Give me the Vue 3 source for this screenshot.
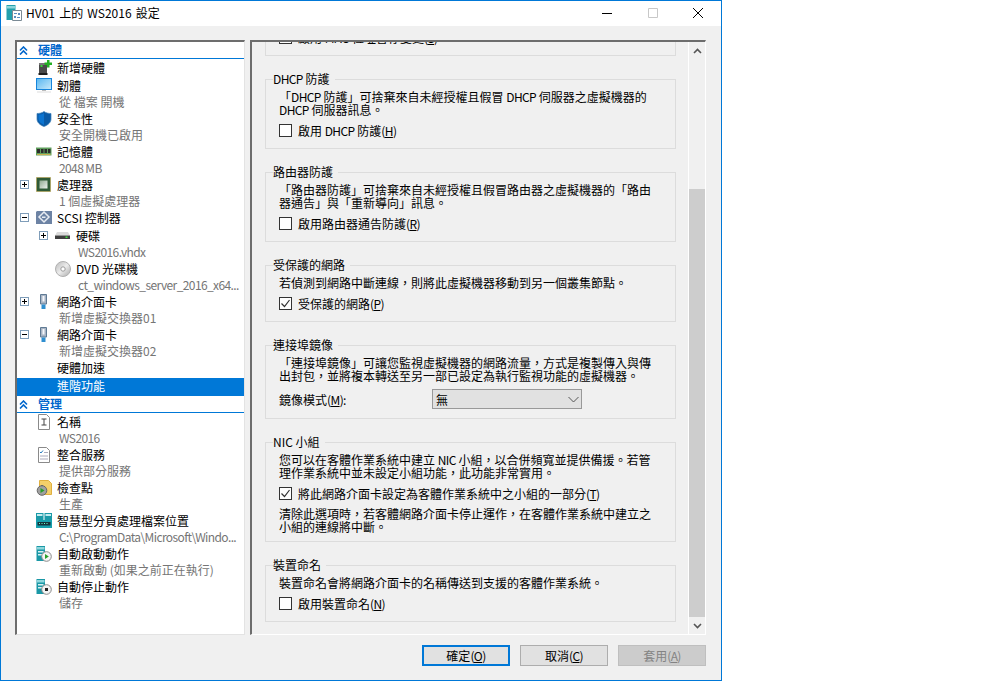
<template>
  <div class="window">
    <div class="titlebar">
      <svg class="app-icon" viewBox="0 0 16 16" v-html="icons.title"></svg>
      <span class="title-text">HV01 上的 WS2016 設定</span>
      <div class="controls">
        <svg width="10" height="10" viewBox="0 0 10 10"><path d="M0 5.500h10" stroke="#000" fill="none" /></svg>
        <svg width="10" height="10" viewBox="0 0 10 10"><path d="M.5.500h9v9h-9z" stroke="#c8c8c8" fill="none" /></svg>
        <svg width="10" height="10" viewBox="0 0 10 10"><path d="M0 0l10 10M10 0L0 10" stroke="#000" fill="none" /></svg>
      </div>
    </div>

    <div class="main">
      <div class="tree">
        <template v-for="row in rows" :key="row.id">
          <div v-if="row.section" class="section">
            <svg width="9" height="9" viewBox="0 0 9 9"><path d="M1 4.500l3.500-3.500L8 4.500M1 8.500L4.500 5 8 8.500" stroke="#0066cc" stroke-width="1.6" fill="none" /></svg>
            <span>{{ row.section }}</span>
          </div>
          <div v-else class="row" :class="{ selected: row.selected, sub: row.sub, nested: row.nested, single: row.single, tight: row.tight }">
            <span class="expander">
              <span v-if="row.exp" class="box">
                <svg width="9" height="9" viewBox="0 0 9 9"><path :d="row.exp === '+' ? 'M2 4.500h5M4.500 2v5' : 'M2 4.500h5'" stroke="#000" fill="none" /></svg>
              </span>
            </span>
            <svg v-if="row.icon" class="icon" viewBox="0 0 16 16" v-html="icons[row.icon]"></svg>
            <span v-else class="icon"></span>
            <span class="label">{{ row.text }}</span>
          </div>
        </template>
      </div>

      <div class="detail">
        <div class="scroller">
          <div class="content">
            <fieldset class="group first">
              <legend>MAC 位址</legend>
              <label class="check"><span class="cb"></span>啟用 MAC 位址暫存變更<span class="lat">(<u>S</u>)</span></label>
            </fieldset>

            <fieldset class="group">
              <legend><span class="lat">DHCP</span> 防護</legend>
              <p>「<span class="lat">DHCP</span> 防護」可捨棄來自未經授權且假冒 <span class="lat">DHCP</span> 伺服器之虛擬機器的<br /><span class="lat">DHCP</span> 伺服器訊息。</p>
              <label class="check"><span class="cb"></span>啟用 <span class="lat">DHCP</span> 防護<span class="lat">(<u>H</u>)</span></label>
            </fieldset>

            <fieldset class="group">
              <legend>路由器防護</legend>
              <p>「路由器防護」可捨棄來自未經授權且假冒路由器之虛擬機器的「路由<br />器通告」與「重新導向」訊息。</p>
              <label class="check"><span class="cb"></span>啟用路由器通告防護<span class="lat">(<u>R</u>)</span></label>
            </fieldset>

            <fieldset class="group">
              <legend>受保護的網路</legend>
              <p>若偵測到網路中斷連線，則將此虛擬機器移動到另一個叢集節點。</p>
              <label class="check"><span class="cb">
                <svg width="11" height="11" viewBox="0 0 11 11"><path d="M1.500 5.500l3 3 5-6.500" stroke="#333" stroke-width="1.200" fill="none" /></svg>
              </span>受保護的網路<span class="lat">(<u>P</u>)</span></label>
            </fieldset>

            <fieldset class="group">
              <legend>連接埠鏡像</legend>
              <p>「連接埠鏡像」可讓您監視虛擬機器的網路流量，方式是複製傳入與傳<br />出封包，並將複本轉送至另一部已設定為執行監視功能的虛擬機器。</p>
              <div class="mirror">
                <span class="mirror-label">鏡像模式<span class="lat">(<u>M</u>):</span></span>
                <div class="select">
                  <span>無</span>
                  <svg width="11" height="7" viewBox="0 0 11 7"><path d="M.5 1l5 5 5-5" stroke="#555" fill="none" /></svg>
                </div>
              </div>
            </fieldset>

            <fieldset class="group">
              <legend>NIC 小組</legend>
              <p>您可以在客體作業系統中建立 <span class="lat">NIC</span> 小組，以合併頻寬並提供備援。若管<br />理作業系統中並未設定小組功能，此功能非常實用。</p>
              <label class="check"><span class="cb">
                <svg width="11" height="11" viewBox="0 0 11 11"><path d="M1.500 5.500l3 3 5-6.500" stroke="#333" stroke-width="1.200" fill="none" /></svg>
              </span>將此網路介面卡設定為客體作業系統中之小組的一部分<span class="lat">(<u>T</u>)</span></label>
              <p class="after">清除此選項時，若客體網路介面卡停止運作，在客體作業系統中建立之<br />小組的連線將中斷。</p>
            </fieldset>

            <fieldset class="group">
              <legend>裝置命名</legend>
              <p>裝置命名會將網路介面卡的名稱傳送到支援的客體作業系統。</p>
              <label class="check"><span class="cb"></span>啟用裝置命名<span class="lat">(<u>N</u>)</span></label>
            </fieldset>
          </div>
        </div>
        <div class="scrollbar">
          <svg width="9" height="6" viewBox="0 0 9 6"><path d="M1 5l3.500-3.500L8 5" stroke="#555" stroke-width="1.600" fill="none" /></svg>
          <div class="track"><div class="thumb"></div></div>
          <svg width="9" height="6" viewBox="0 0 9 6"><path d="M1 1l3.500 3.500L8 1" stroke="#555" stroke-width="1.600" fill="none" /></svg>
        </div>
      </div>
    </div>

    <div class="footer">
      <button class="btn default">確定<span class="lat">(<u>O</u>)</span></button>
      <button class="btn">取消<span class="lat">(<u>C</u>)</span></button>
      <button class="btn disabled">套用<span class="lat">(<u>A</u>)</span></button>
    </div>
  </div>
</template>

<script setup>
const server = `<path d="M.5 0h8.500v15H.5z" fill="#1a98a6"/><path d="M1 1h7.500v2.500H1z" fill="#8fd6dc"/><path d="M2 5h5.500v1.500H2zM2 8h5.500v1.500H2z" fill="#d8f0f2"/>`

const icons = {
  title: `<path d="M.5 0h9v15h-9z" fill="#23a0ad"/><path d="M1 1h8v2.500H1z" fill="#8ad4da"/><path d="M6.500 5.500h9v10h-9z" fill="#fff" stroke="#7a8a95"/><path d="M8 8h3v1H8zM12 8h2v2h-2zM8 11h2v2H8zM11 12h3v1h-3z" fill="#5a8ec0"/>`,
  add: `<path d="M3 3h8v10H3z" fill="#4a4a4a"/><path d="M3 3h8v2H3z" fill="#777"/><path d="M2.500 13h9v2h-9z" fill="#1e1e1e"/><path d="M4.500 5h2v2h-2z" fill="#38d838"/><path d="M11 0h2.500v2.500H16V5h-2.500v2.500H11V5H8.500V2.500H11z" fill="#24b024"/>`,
  fw: `<defs><linearGradient id="fwg" x1="0" y1="0" x2="1" y2="1"><stop offset="0" stop-color="#5cb8f0"/><stop offset="1" stop-color="#c4e8fb"/></linearGradient></defs><path d="M0 0h16v12H0z" fill="#1685dc"/><path d="M1 1h14v10H1z" fill="url(#fwg)"/><path d="M6 12h4v1H6z" fill="#bbb"/><path d="M1 13.500h14v1H1z" fill="#dcdcdc"/>`,
  shield: `<path d="M8 .5C6 2 3.500 2.500 1 2.500V8c0 3.500 3 6 7 7.500 4-1.500 7-4 7-7.500V2.500C12.500 2.500 10 2 8 .5z" fill="#0a5aa6" stroke="#3d7fb8" stroke-width=".7"/><path d="M8 2C6.500 3 4.500 3.500 2.500 3.500V8c0 2.500 2.500 4.500 5.500 6z" fill="#0c74d0"/>`,
  ram: `<path d="M0 3.500h15.500v8H0z" fill="#5f9e5c"/><path d="M1 5h3v4H1zM5 5h2.500v4H5zM8.500 5H11v4H8.500zM12 5h2.500v4H12z" fill="#2c2c2c"/><path d="M1 10h13.500v1H1z" fill="#c8b050"/>`,
  cpu: `<defs><linearGradient id="cpug" x1="0" y1="0" x2="1" y2="1"><stop offset="0" stop-color="#8fa890"/><stop offset="1" stop-color="#eef2ee"/></linearGradient></defs><path d="M.5.500h14v14H.5z" fill="#2f5a36" stroke="#b89a3a" stroke-dasharray="1 1"/><path d="M2 2h11v11H2z" fill="#2f5a36"/><path d="M3.500 3.500h8v8h-8z" fill="url(#cpug)"/>`,
  scsi: `<path d="M1 1h15v13H0V2z" fill="#6d83a4"/><path d="M8 2l5 5-5 5-5-5z" fill="none" stroke="#e8ecf2" stroke-width="1.500"/><path d="M6 6.500h3.500V8H6z" fill="#e8ecf2"/>`,
  disk: `<path d="M2 4h11l2 3.500H0z" fill="#dadada"/><path d="M0 7.500h15V11H0z" fill="#3f3f3f"/><path d="M10.500 8.500h2v1.500h-2z" fill="#40e040"/>`,
  dvd: `<defs><linearGradient id="dvdg" x1="0" y1="0" x2="1" y2="1"><stop offset="0" stop-color="#b8b8b8"/><stop offset=".5" stop-color="#ececec"/><stop offset="1" stop-color="#a8a8a8"/></linearGradient></defs><circle cx="8" cy="8" r="7.500" fill="url(#dvdg)" stroke="#b0b0b0"/><circle cx="8" cy="8" r="2.200" fill="#fff" stroke="#9a9a9a"/>`,
  nic: `<path d="M4.500.500h6v9.500h-6z" fill="#a8b4c4" stroke="#5f7a94"/><path d="M6.500 2h2v5.500h-2z" fill="#f4f6fa"/><path d="M5.500 10.500h4V15h-4z" fill="#2f8fd0"/>`,
  name: `<path d="M2.500.5h8l3 3v12h-11z" fill="#fff" stroke="#8a8a8a"/><path d="M5.500 5h5M8 5v6M5.500 11h5" stroke="#444" fill="none"/>`,
  integ: `<path d="M2.500.5h8l3 3v12h-11z" fill="#fff" stroke="#8a8a8a"/><path d="M4 5l1 1 2-2.500" stroke="#2a7fc0" fill="none"/><path d="M8 5.500h4M4 9h8M4 12h8" stroke="#aab" fill="none"/>`,
  check: `<path d="M3.500.5h9l3 3v11h-12z" fill="#f4cf6a" stroke="#e0b040"/><circle cx="6" cy="10.500" r="4.800" fill="#a0a0a0" stroke="#666"/><path d="M4.500 8v5l4-2.500z" fill="#28a028"/><path d="M5 5h2v1H5z" fill="#666"/>`,
  smart: `<path d="M0 0h7.500v7H0zM8.500 0H16v7H8.500z" fill="#1a9aa8"/><path d="M1 1h5.500v2H1zM9.500 1H15v2H9.500z" fill="#c4ecef"/><path d="M0 7h16v8H0z" fill="#17a0ae"/><path d="M1.500 9h13v3.500h-13z" fill="#15323c"/><path d="M3 10h1v1H3zM5.500 10h1v1h-1zM8 10h1v1H8zM10.500 10h1v1h-1z" fill="#6fc"/>`,
  start: `${server}<circle cx="10.500" cy="10.500" r="4.800" fill="#f4f4f4" stroke="#8a8a8a"/><path d="M9 8v5l3.800-2.500z" fill="#28a028"/>`,
  stop: `${server}<circle cx="10.500" cy="10.500" r="4.800" fill="#f4f4f4" stroke="#8a8a8a"/><path d="M9 9h3v3H9z" fill="#222"/>`,
}

const rows = [
  { section: '硬體' },
  { text: '新增硬體', icon: 'add', single: true },
  { text: '韌體', icon: 'fw' },
  { text: '從 檔案 開機', sub: true },
  { text: '安全性', icon: 'shield' },
  { text: '安全開機已啟用', sub: true },
  { text: '記憶體', icon: 'ram' },
  { text: '2048 MB', sub: true, tight: true },
  { text: '處理器', icon: 'cpu', exp: '+' },
  { text: '1 個虛擬處理器', sub: true },
  { text: 'SCSI 控制器', icon: 'scsi', exp: '-', single: true },
  { text: '硬碟', icon: 'disk', exp: '+', nested: true },
  { text: 'WS2016.vhdx', sub: true, nested: true, tight: true },
  { text: 'DVD 光碟機', icon: 'dvd', nested: true },
  { text: 'ct_windows_server_2016_x64...', sub: true, nested: true, tight: true },
  { text: '網路介面卡', icon: 'nic', exp: '+' },
  { text: '新增虛擬交換器01', sub: true },
  { text: '網路介面卡', icon: 'nic', exp: '-' },
  { text: '新增虛擬交換器02', sub: true },
  { text: '硬體加速', single: true },
  { text: '進階功能', selected: true, single: true },
  { section: '管理' },
  { text: '名稱', icon: 'name' },
  { text: 'WS2016', sub: true, tight: true },
  { text: '整合服務', icon: 'integ' },
  { text: '提供部分服務', sub: true },
  { text: '檢查點', icon: 'check' },
  { text: '生產', sub: true },
  { text: '智慧型分頁處理檔案位置', icon: 'smart' },
  { text: 'C:\\ProgramData\\Microsoft\\Windo...', sub: true, tight: true },
  { text: '自動啟動動作', icon: 'start' },
  { text: '重新啟動 (如果之前正在執行)', sub: true },
  { text: '自動停止動作', icon: 'stop' },
  { text: '儲存', sub: true },
].map((r, i) => ({ ...r, id: i }))
</script>

<style>
html, body {
  margin: 0;
  background: #fff;
}
</style>

<style scoped>
.window {
  width: 722px;
  height: 681px;
  box-sizing: border-box;
  border: 1px solid #0078d7;
  background: #f0f0f0;
  display: flex;
  flex-direction: column;
  font-family: "Noto Sans CJK TC", "Noto Sans", sans-serif;
  font-size: 12px;
  color: #000;
}
.lat {
  letter-spacing: -.6px;
}

.titlebar {
  height: 25px;
  background: #fff;
  display: flex;
  align-items: center;
  padding: 0 0 1px 5px;
  box-sizing: border-box;
}
.app-icon {
  width: 16px;
  height: 16px;
}
.title-text {
  margin: 0 0 2px 4px;
  flex: 1;
  word-spacing: 1.5px;
}
.controls {
  display: flex;
  gap: 35.5px;
  padding-right: 18px;
}

.main {
  display: flex;
  gap: 5px;
  padding: 14px 15px 0 14px;
  height: 595px;
}

.tree {
  width: 230px;
  flex: none;
  box-sizing: border-box;
  background: #fff;
  border-top: 2px solid #6d6d6d;
  border-left: 2px solid #6d6d6d;
  border-right: 1px solid #e3e3e3;
  border-bottom: 1px solid #e3e3e3;
  overflow: hidden;
}
.section {
  height: 17px;
  box-sizing: border-box;
  display: flex;
  align-items: center;
  gap: 10px;
  padding-left: 2px;
  color: #0066cc;
  font-weight: bold;
  border-bottom: 1px solid #0078d7;
  line-height: 14px;
}
.section + .row {
  margin-top: .5px;
}
.row.selected + .section {
  margin-top: .5px;
}
.row {
  height: 16.5px;
  box-sizing: border-box;
  display: flex;
  align-items: center;
  white-space: nowrap;
  line-height: 16px;
}
.row.sub {
  padding-bottom: 1px;
  color: #757575;
}
.row.single {
  height: 18px;
  padding-bottom: 2px;
}
.row.selected {
  background: #0078d7;
  color: #fff;
}
.row.tight .label {
  letter-spacing: -.6px;
}
.row.sub .label {
  margin-left: 2px;
}
.expander {
  width: 19px;
  padding-left: 3px;
  box-sizing: border-box;
  flex: none;
}
.box {
  display: block;
  width: 9px;
  height: 9px;
  border: 1px solid #7f9db9;
  box-sizing: border-box;
}
.box svg {
  display: block;
  margin: -1px;
}
.row.nested {
  padding-left: 19px;
}
.icon {
  width: 16px;
  height: 16px;
  flex: none;
  margin-right: 5px;
}

.detail {
  width: 456px;
  flex: none;
  box-sizing: border-box;
  display: flex;
  border-top: 2px solid #6d6d6d;
  border-left: 2px solid #6d6d6d;
  border-right: 1px solid #fff;
  border-bottom: 1px solid #fff;
}
.scroller {
  flex: 1;
  overflow: hidden;
}
.content {
  margin-top: -37px;
  padding: 0 12px 0 13px;
}
.group {
  margin: 0 0 16px;
  padding: 4px 0 11px 13px;
  border: 1px solid #dcdcdc;
  min-width: 0;
}
.group legend {
  padding: 0 5px 0 0;
  margin-left: -6px;
  line-height: 14px;
}
.group p {
  margin: 0;
  line-height: 13px;
  white-space: nowrap;
}
.group p.after {
  margin: 7px 0 -3px;
}
.check {
  display: flex;
  align-items: center;
  height: 14px;
  margin-top: 7px;
  white-space: pre;
}
.cb {
  width: 13px;
  height: 13px;
  box-sizing: border-box;
  border: 1px solid #333;
  background: #fff;
  margin-right: 6px;
  flex: none;
  display: flex;
  align-items: center;
  justify-content: center;
}
.mirror {
  display: flex;
  align-items: center;
  margin: 7px 0 -2px;
}
.mirror-label {
  width: 153px;
}
.select {
  width: 150px;
  height: 20px;
  box-sizing: border-box;
  background: #e1e1e1;
  border: 1px solid #999;
  display: flex;
  align-items: center;
  justify-content: space-between;
  padding: 0 2px 0 3px;
}

.scrollbar {
  width: 17px;
  flex: none;
  border-left: 1px solid #fff;
  display: flex;
  flex-direction: column;
  align-items: center;
  padding-top: 6px;
  box-sizing: border-box;
}
.track {
  flex: 1;
  width: 100%;
  margin: 6px 0;
  display: flex;
  flex-direction: column;
  justify-content: flex-end;
}
.thumb {
  height: 428px;
  background: #cdcdcd;
}
.scrollbar svg:last-child {
  margin-bottom: 5px;
}

.footer {
  display: flex;
  justify-content: flex-end;
  gap: 10px;
  padding: 10px 15px 0 0;
}
.btn {
  width: 88px;
  height: 21px;
  box-sizing: border-box;
  border: 1px solid #adadad;
  background: #e1e1e1;
  font: inherit;
  color: #000;
  padding: 0;
}
.btn.default {
  border: 2px solid #0078d7;
}
.btn.disabled {
  background: #cccccc;
  border-color: #bfbfbf;
  color: #838383;
}
</style>
